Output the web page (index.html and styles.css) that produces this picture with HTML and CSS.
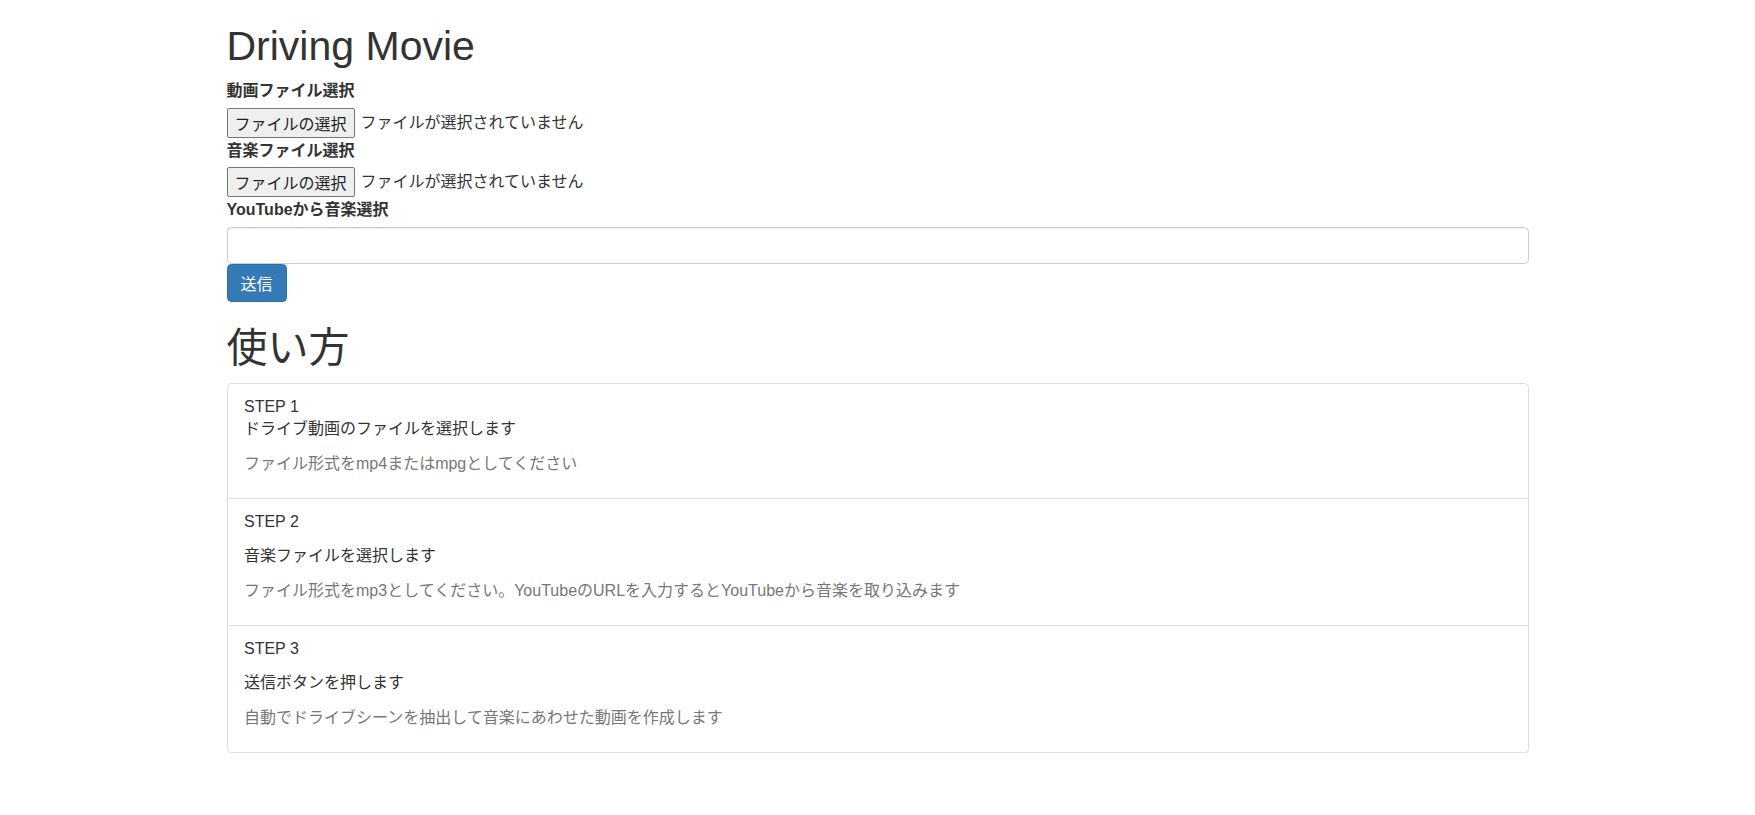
FILE: index.html
```html
<!DOCTYPE html>
<html lang="ja">
<head>
    <meta charset="UTF-8">
    <meta name="viewport" content="width=device-width, initial-scale=1.0">
    <title>Driving Movie</title>
    <link rel="stylesheet" href="styles.css">
</head>
<body>
    <div class="container">
        <h1>Driving Movie</h1>
        <form id="movieForm">
            <label for="movieFile">動画ファイル選択</label>
            <div class="file-row">
                <button type="button" class="file-btn" id="movieFile">ファイルの選択</button>
                <span class="file-name">ファイルが選択されていません</span>
            </div>
            <label for="musicFile">音楽ファイル選択</label>
            <div class="file-row">
                <button type="button" class="file-btn" id="musicFile">ファイルの選択</button>
                <span class="file-name">ファイルが選択されていません</span>
            </div>
            <label for="youtubeUrl">YouTubeから音楽選択</label>
            <input type="text" class="form-control" id="youtubeUrl" name="youtubeUrl">
            <button type="submit" class="btn-primary">送信</button>
        </form>

        <h1 class="panel-title">使い方</h1>
        <div class="panel">
            <div class="list-item first">
                <div class="step">STEP 1</div>
                <div class="step-title">ドライブ動画のファイルを選択します</div>
                <p class="step-text">ファイル形式をmp4またはmpgとしてください</p>
            </div>
            <div class="list-item">
                <div class="step">STEP 2</div>
                <div class="step-title">音楽ファイルを選択します</div>
                <p class="step-text">ファイル形式をmp3としてください。YouTubeのURLを入力するとYouTubeから音楽を取り込みます</p>
            </div>
            <div class="list-item">
                <div class="step">STEP 3</div>
                <div class="step-title">送信ボタンを押します</div>
                <p class="step-text">自動でドライブシーンを抽出して音楽にあわせた動画を作成します</p>
            </div>
        </div>
    </div>
</body>
</html>
```

FILE: styles.css
```css
body {
    margin: 0;
    font-family: "Liberation Sans", "Noto Sans CJK JP", sans-serif;
    font-size: 16px;
    line-height: 22px;
    color: #333;
    background: #fff;
}
.container {
    width: 1302px;
    margin: 0 auto;
}
h1 {
    font-size: 41px;
    font-weight: normal;
    line-height: 44px;
    margin: 24px 0 12px;
}
h1.panel-title {
    margin-bottom: 13px;
}
label {
    display: block;
    font-weight: bold;
    margin-bottom: 5.5px;
}
.file-row {
    display: flex;
    align-items: flex-start;
    gap: 6px;
    height: 32px;
}
.file-btn {
    box-sizing: border-box;
    height: 30px;
    padding: 0 7px;
    font-family: inherit;
    font-size: 16px;
    color: #222;
    background: #efefef;
    border: 1px solid #767676;
    border-radius: 2px;
}
.file-name {
    line-height: 30px;
}
.form-control {
    display: block;
    box-sizing: border-box;
    width: 100%;
    height: 37px;
    margin: 0;
    padding: 6px 13px;
    font-family: inherit;
    font-size: 16px;
    border: 1px solid #ccc;
    border-radius: 4.4px;
    box-shadow: inset 0 1px 1px rgba(0, 0, 0, .075);
}
.btn-primary {
    display: block;
    box-sizing: border-box;
    height: 38px;
    padding: 0 13px;
    font-family: inherit;
    font-size: 16px;
    color: #fff;
    background-color: #337ab7;
    border: 1px solid #2e6da4;
    border-radius: 4.4px;
    cursor: pointer;
}
.panel {
    border: 1px solid #ddd;
    border-radius: 4.4px;
    box-shadow: 0 1px 1px rgba(0, 0, 0, .05);
}
.list-item {
    padding: 12px 16.5px 11px;
    border-top: 1px solid #ddd;
}
.list-item.first {
    border-top: none;
}
.step {
    margin-bottom: 12px;
}
.first .step {
    margin-bottom: 0;
}
.step-title {
    margin-bottom: 13px;
}
.step-text {
    margin: 0 0 12px;
    color: #777;
}
```
